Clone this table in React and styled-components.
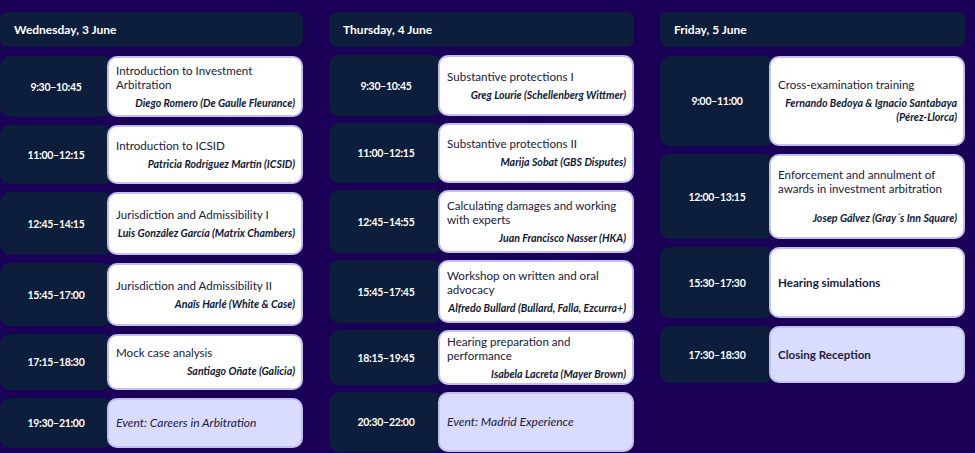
import React from 'react'
import styled, { createGlobalStyle } from 'styled-components'

const GlobalStyle = createGlobalStyle`
  html, body {
    margin: 0;
    padding: 0;
    background: #1b0057;
  }
  body {
    font-family: Lato, "Open Sans", sans-serif;
  }
`

const days = [
  {
    day: 'Wednesday, 3 June',
    width: 303,
    gap: 8,
    sessions: [
      { time: '9:30–10:45', title: 'Introduction to Investment Arbitration', speaker: 'Diego Romero (De Gaulle Fleurance)', h: 61 },
      { time: '11:00–12:15', title: 'Introduction to ICSID', speaker: 'Patricia Rodríguez Martín (ICSID)', h: 59 },
      { time: '12:45–14:15', title: 'Jurisdiction and Admissibility I', speaker: 'Luis González García (Matrix Chambers)', h: 63 },
      { time: '15:45–17:00', title: 'Jurisdiction and Admissibility II', speaker: 'Anaïs Harlé (White & Case)', h: 63 },
      { time: '17:15–18:30', title: 'Mock case analysis', speaker: 'Santiago Oñate (Galicia)', h: 56 },
      { time: '19:30–21:00', title: 'Event: Careers in Arbitration', event: true, h: 50 },
    ],
  },
  {
    day: 'Thursday, 4 June',
    width: 305,
    gap: 7,
    sessions: [
      { time: '9:30–10:45', title: 'Substantive protections I', speaker: 'Greg Lourie (Schellenberg Wittmer)', h: 61 },
      { time: '11:00–12:15', title: 'Substantive protections II', speaker: 'Marija Sobat (GBS Disputes)', h: 60 },
      { time: '12:45–14:55', title: 'Calculating damages and working with experts', speaker: 'Juan Francisco Nasser (HKA)', h: 63 },
      { time: '15:45–17:45', title: 'Workshop on written and oral advocacy', speaker: 'Alfredo Bullard (Bullard, Falla, Ezcurra+)', h: 63 },
      { time: '18:15–19:45', title: 'Hearing preparation and performance', speaker: 'Isabela Lacreta (Mayer Brown)', h: 55 },
      { time: '20:30–22:00', title: 'Event: Madrid Experience', event: true, h: 60 },
    ],
  },
  {
    day: 'Friday, 5 June',
    width: 305,
    gap: 8,
    sessions: [
      { time: '9:00–11:00', title: 'Cross-examination training', speaker: 'Fernando Bedoya & Ignacio Santabaya (Pérez-Llorca)', h: 90 },
      { time: '12:00–13:15', title: 'Enforcement and annulment of awards in investment arbitration', speaker: 'Josep Gálvez (Gray´s Inn Square)', h: 85, spaced: true },
      { time: '15:30–17:30', title: 'Hearing simulations', h: 71, strong: true },
      { time: '17:30–18:30', title: 'Closing Reception', h: 57, strong: true, tint: true },
    ],
  },
]

const Page = styled.div`
  display: flex;
  gap: 26px;
  padding-top: 12px;
`

const Column = styled.div`
  width: ${({ $width }) => $width}px;
  display: flex;
  flex-direction: column;
  gap: ${({ $gap }) => $gap}px;
`

const DayHeader = styled.div`
  height: 35px;
  margin-bottom: 1px;
  display: flex;
  align-items: center;
  padding-left: 14px;
  background: #0c1e3b;
  border-radius: 8px;
  color: #fff;
  font-size: 12px;
  font-weight: 700;
`

const Row = styled.div`
  height: ${({ $h }) => $h}px;
  display: flex;
`

const TimeBox = styled.div`
  flex: 1;
  display: flex;
  align-items: center;
  justify-content: center;
  background: #0c1e3b;
  border-radius: 10px;
  color: #fff;
  font-size: 10.5px;
  letter-spacing: -0.3px;
  font-weight: 700;
`

const Card = styled.div`
  width: 196px;
  box-sizing: border-box;
  margin-left: -5px;
  position: relative;
  display: flex;
  flex-direction: column;
  justify-content: center;
  padding: 4px 6px 4px 7px;
  background: ${({ $tint }) => ($tint ? '#d9dcfe' : '#fff')};
  border: 2px solid #c3c0f0;
  border-radius: 10px;
  color: #18203d;
`

const Title = styled.div`
  font-size: ${({ $event }) => ($event ? '12px' : '11.6px')};
  line-height: 14px;
  font-weight: ${({ $strong }) => ($strong ? 700 : 400)};
  font-style: ${({ $event }) => ($event ? 'italic' : 'normal')};
  margin-bottom: ${({ $spaced }) => ($spaced ? '11px' : '0')};
`

const Speaker = styled.div`
  margin-top: 4px;
  text-align: right;
  font-size: 10.6px;
  line-height: 14px;
  font-style: italic;
  font-weight: 700;
  color: #0f1836;
`

export default function App() {
  return (
    <>
      <GlobalStyle />
      <Page>
        {days.map((d) => (
          <Column key={d.day} $width={d.width} $gap={d.gap}>
            <DayHeader>{d.day}</DayHeader>
            {d.sessions.map((s) => (
              <Row key={s.time} $h={s.h}>
                <TimeBox>{s.time}</TimeBox>
                <Card $tint={s.event || s.tint}>
                  <Title $strong={s.strong} $event={s.event} $spaced={s.spaced}>
                    {s.title}
                  </Title>
                  {s.speaker && <Speaker>{s.speaker}</Speaker>}
                </Card>
              </Row>
            ))}
          </Column>
        ))}
      </Page>
    </>
  )
}
